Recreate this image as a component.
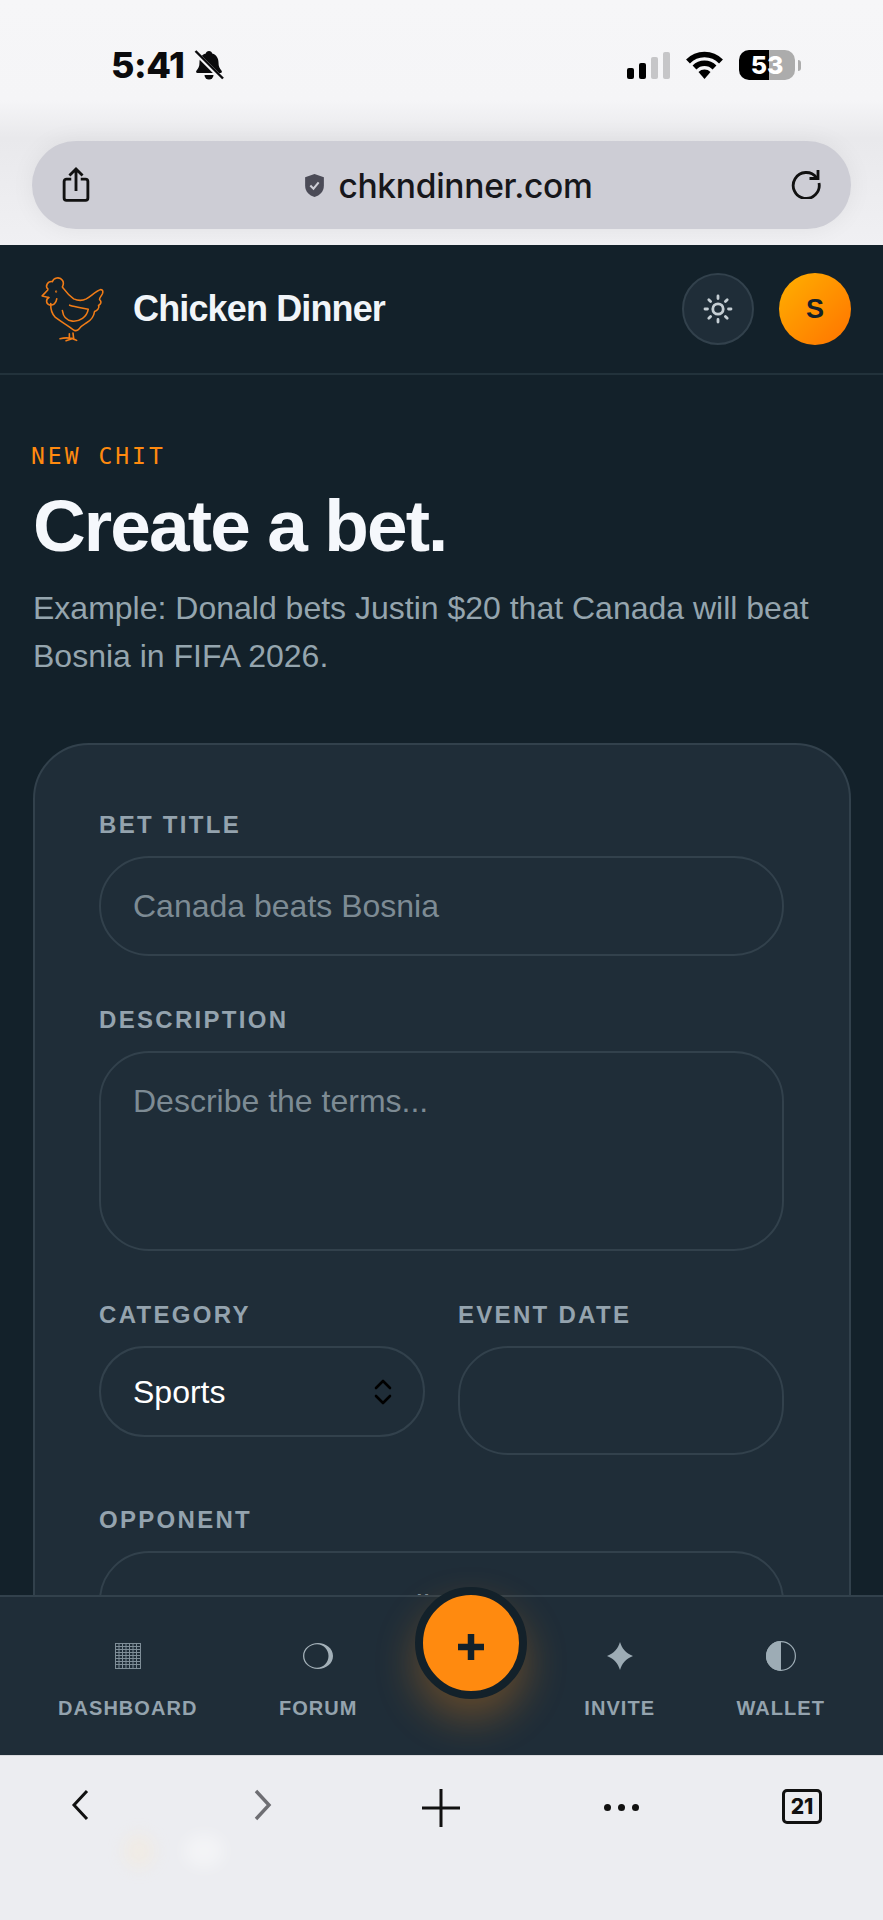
<div class="phone">
  <div class="browser-top">
    <div class="status">
      <div class="time">5:41
        <svg class="bell" viewBox="0 0 30 30" width="30" height="30">
          <path d="M15 1c1.800 0 2.900 1.100 3.200 2.500 4.300 1.300 6.300 4.800 6.300 9 0 4 1.200 6 3.100 8.200.7.900.2 2.300-1.100 2.300H3.500c-1.300 0-1.800-1.400-1.100-2.300C4.300 18.500 5.500 16.500 5.500 12.500c0-4.200 2-7.700 6.300-9C12.100 2.100 13.200 1 15 1z" fill="#0b0b0d"/>
          <path d="M10.500 25h9a4.500 4.500 0 0 1-9 0z" fill="#0b0b0d"/>
          <path d="M3 4l26 26" stroke="#f5f5f7" stroke-width="4.500"/>
          <path d="M1.500 1l27.500 27.500" stroke="#0b0b0d" stroke-width="2.400"/>
        </svg>
      </div>
      <div class="status-right">
        <div class="signal">
          <i class="on s1"></i><i class="on s2"></i><i class="s3"></i><i class="s4"></i>
        </div>
        <svg viewBox="0 0 38 28" width="39" height="28">
          <g fill="none" stroke="#000" stroke-width="5.400">
            <path d="M2.500 10.500a23 23 0 0 1 33 0"/>
            <path d="M9 16.500a14 14 0 0 1 20 0"/>
          </g>
          <path d="M13 21a8.500 8.500 0 0 1 12 0l-6 7z"/>
        </svg>
        <div class="battery"><span>53</span></div>
        <div class="nub"></div>
      </div>
    </div>
    <div class="urlbar">
      <svg viewBox="0 0 24 32" width="30" height="38" fill="none" stroke="#111" stroke-width="2.400">
        <path d="M8 11H4a2 2 0 0 0-2 2v14a2 2 0 0 0 2 2h16a2 2 0 0 0 2-2V13a2 2 0 0 0-2-2H16"/>
        <path d="M12 21V3M6.500 8L12 2.500 17.500 8"/>
      </svg>
      <div class="domain">
        <svg viewBox="0 0 20 24" width="21" height="25">
          <path d="M10 1l9 3v8c0 6-4 9.500-9 11-5-1.500-9-5-9-11V4z" fill="#4b4b57"/>
          <path d="M6 12l3 3 5-6" fill="none" stroke="#cdcdd5" stroke-width="2"/>
        </svg>
        <span>chkndinner.com</span>
      </div>
      <svg class="reload" viewBox="0 0 32 32" width="32" height="32" fill="none" stroke="#111" stroke-width="2.800">
        <path d="M26.500 10.500A13 13 0 1 0 29 16"/>
        <path d="M28 3v8.500h-8.500"/>
      </svg>
    </div>
  </div>

  <header>
    <svg class="logo" viewBox="120 105 195 205" width="65" height="68" fill="none" stroke="#f07c17" stroke-width="4.800" stroke-linecap="round" stroke-linejoin="round">
      <path d="M143 147c-8-8-2-24 14-22 3-12 22-16 30-4 6 8 2 16 0 20 8 10 16 24 34 36 14 6 26 6 38 0 14-8 30-24 44-28 6 0 7 6 5 12-3 8-10 12-9 18 8 6 4 14-3 18 5 8-6 16-12 18-2 14-10 26-24 34-10 6-18 10-24 20-8 8-16 2-26-6-14-10-28-18-44-30-10-10-15-22-14-42"/>
      <path d="M143 150l-17 18 20 5"/>
      <path d="M146 173c-10 6-8 20 2 22 12 2 20-4 22-18"/>
      <path d="M209 196c18 6 38 8 56 12-4 24-26 38-48 36-18-2-28-16-30-32"/>
      <path d="M208 282v14M219 280l2 16M180 297c12-3 24-3 36-1 4 1 10 4 14 6M198 303l18-6"/>
      <circle cx="168" cy="155" r="1"/>
    </svg>
    <div class="brand">Chicken Dinner</div>
    <button class="theme" aria-label="Theme">
      <svg viewBox="0 0 30 30" width="30" height="30" fill="none" stroke="#c5ced4" stroke-width="2.800" stroke-linecap="round">
        <circle cx="15" cy="15" r="5.200"/>
        <path d="M15 2v2.500M15 25.500V28M2 15h2.500M25.500 15H28M5.800 5.800l1.800 1.800M22.400 22.400l1.800 1.800M5.800 24.200l1.800-1.800M22.400 7.600l1.800-1.800"/>
      </svg>
    </button>
    <div class="avatar">S</div>
  </header>

  <main>
    <div class="eyebrow">NEW CHIT</div>
    <h1>Create a bet.</h1>
    <p class="lead">Example: Donald bets Justin $20 that Canada will beat Bosnia in FIFA 2026.</p>

    <form class="card">
      <label>
        <span>BET TITLE</span>
        <input type="text" placeholder="Canada beats Bosnia" />
      </label>
      <label>
        <span>DESCRIPTION</span>
        <textarea placeholder="Describe the terms..."></textarea>
      </label>
      <div class="two">
        <label>
          <span>CATEGORY</span>
          <div class="select-wrap">
            <select>
              <option>Sports</option>
              <option>Politics</option>
              <option>Other</option>
            </select>
            <svg viewBox="0 0 18 26" width="18" height="26" fill="none" stroke="#000" stroke-width="2.600" stroke-linecap="round" stroke-linejoin="round">
              <path d="M2 9l7-7 7 7M2 17l7 7 7-7"/>
            </svg>
          </div>
        </label>
        <label>
          <span>EVENT DATE</span>
          <input class="date" type="text" />
        </label>
      </div>
      <label>
        <span>OPPONENT</span>
        <input class="opponent" type="text" placeholder="Opponent user email" />
      </label>
    </form>
  </main>

  <nav>
    <div class="item">
      <svg viewBox="0 0 26 26" width="26" height="26" fill="none" stroke="#7f8e98" stroke-width="1">
        <rect x=".5" y=".5" width="25" height="25"/>
        <path d="M4 0v26M7.500 0v26M11 0v26M14.500 0v26M18 0v26M21.500 0v26M0 3.500h26M0 6.500h26M0 9.500h26M0 12.500h26M0 15.500h26M0 18.500h26M0 21.500h26"/>
      </svg>
      <span>DASHBOARD</span>
    </div>
    <div class="item">
      <svg viewBox="0 0 30 26" width="30" height="26">
        <path fill-rule="evenodd" fill="#a3b0b8" d="M15 0c8 0 15 5.500 15 13s-7 13-15 13S0 20.500 0 13 7 0 15 0zm-1 1.300C7 1.300 1.300 6.500 1.300 13S7 24.700 14 24.700c6.500 0 11.500-5.200 11.500-11.700S20.500 1.300 14 1.300z"/>
      </svg>
      <span>FORUM</span>
    </div>
    <div class="fab-slot">
      <button class="fab" aria-label="New bet">
        <svg viewBox="0 0 26 26" width="26" height="26"><path d="M13 0v26M0 13h26" stroke="#13212a" stroke-width="6.500"/></svg>
      </button>
    </div>
    <div class="item">
      <svg viewBox="0 0 28 28" width="28" height="28">
        <path fill="#9dacb5" d="M14 0c2 6.500 5.500 11 13 14-7.500 3-11 7.500-13 14-2-6.500-5.500-11-13-14 7.500-3 11-7.500 13-14z"/>
      </svg>
      <span>INVITE</span>
    </div>
    <div class="item">
      <svg viewBox="0 0 30 30" width="30" height="30">
        <circle cx="15" cy="15" r="14.400" fill="none" stroke="#9dacb5" stroke-width="1.200"/>
        <path d="M15 0a15 15 0 0 0 0 30z" fill="#9dacb5"/>
      </svg>
      <span>WALLET</span>
    </div>
  </nav>

  <div class="browser-bottom">
    <svg viewBox="0 0 18 32" width="18" height="32" fill="none" stroke="#111" stroke-width="3"><path d="M16 2L3 16l13 14"/></svg>
    <svg class="fwd" viewBox="0 0 18 32" width="18" height="32" fill="none" stroke="#6e6e73" stroke-width="3.400"><path d="M2 2l13 14L2 30"/></svg>
    <svg class="plus" viewBox="0 0 38 38" width="38" height="38" stroke="#111" stroke-width="3"><path d="M19 0v38M0 19h38"/></svg>
    <div class="dots"><i></i><i></i><i></i></div>
    <div class="tabs">21</div>
    <i class="smudge a"></i>
    <i class="smudge b"></i>
  </div>
</div>

<style>
  :global(body) {
    margin: 0;
    background: #13212a;
  }

  .phone {
    width: 883px;
    height: 1920px;
    display: flex;
    flex-direction: column;
    overflow: hidden;
    font-family: "Liberation Sans", Arial, sans-serif;
    background: #13212a;
  }

  /* safari chrome */
  .browser-top {
    height: 245px;
    box-sizing: border-box;
    padding: 49px 32px 0;
    background: linear-gradient(#f6f6f8 0, #f5f5f7 100px, #e9e9ec 138px, #f0f0f3 245px);
  }
  .status {
    height: 92px;
    display: flex;
    justify-content: space-between;
    align-items: flex-start;
    padding: 0 50px 0 79px;
  }
  .time {
    display: flex;
    align-items: center;
    gap: 9px;
    font-family: Inter, sans-serif;
    font-weight: 800;
    font-size: 36px;
    line-height: 32px;
    letter-spacing: -.4px;
    color: #0b0b0d;
  }
  .status-right {
    display: flex;
    align-items: center;
    height: 32px;
  }
  .signal {
    display: flex;
    align-items: flex-end;
    gap: 5px;
    height: 27px;
    margin-right: 15px;
  }
  .signal i {
    width: 7px;
    border-radius: 2px;
    background: #c6c6c8;
  }
  .signal .on { background: #000; }
  .s1 { height: 11px; }
  .s2 { height: 16px; }
  .s3 { height: 22px; }
  .s4 { height: 27px; }
  .battery {
    width: 56px;
    height: 30px;
    margin-left: 15px;
    border-radius: 10px;
    background: linear-gradient(90deg, #000 53.500%, #acacac 53.500%);
    color: #fff;
    font-family: Inter, sans-serif;
    font-weight: 800;
    font-size: 25px;
    line-height: 30px;
    text-align: center;
  }
  .nub {
    width: 3px;
    height: 11px;
    margin-left: 3px;
    border-radius: 0 3px 3px 0;
    background: #acacac;
  }
  .urlbar {
    height: 88px;
    display: flex;
    align-items: center;
    justify-content: space-between;
    padding: 0 29px;
    border-radius: 44px;
    background: #cdcdd5;
    box-shadow: 0 0 24px rgba(0, 0, 0, .06);
  }
  .domain {
    display: flex;
    align-items: center;
    gap: 13px;
    margin-left: 16px;
    font-family: Inter, sans-serif;
    font-weight: 500;
    font-size: 33.600px;
    letter-spacing: -.3px;
    color: #17171b;
  }
  .reload { margin-top: -4px; }

  /* app header */
  header {
    height: 130px;
    flex: none;
    box-sizing: border-box;
    display: flex;
    align-items: center;
    padding: 0 32px 0 40px;
    border-bottom: 2px solid #22323b;
  }
  .logo { flex: none; }
  .brand {
    flex: 1;
    margin-left: 28px;
    font-weight: 700;
    font-size: 36px;
    letter-spacing: -.86px;
    color: #f1f5f9;
  }
  .theme {
    width: 72px;
    height: 72px;
    padding: 0;
    display: flex;
    align-items: center;
    justify-content: center;
    border: 2px solid #32414c;
    border-radius: 50%;
    background: #1f2d38;
  }
  .avatar {
    width: 72px;
    height: 72px;
    margin-left: 25px;
    border-radius: 50%;
    background: linear-gradient(135deg, #ffb000, #ff7300);
    color: #13212a;
    font-weight: 700;
    font-size: 27px;
    line-height: 72px;
    text-align: center;
  }

  /* page */
  main {
    flex: 1;
    min-height: 0;
    overflow: hidden;
    padding: 67px 32px 0 33px;
  }
  .eyebrow {
    margin-left: -2px;
    font-family: "DejaVu Sans Mono", monospace;
    font-size: 23px;
    line-height: 28px;
    letter-spacing: 3px;
    color: #ff8a0f;
  }
  h1 {
    margin: 14px 0 0;
    font-weight: 700;
    font-size: 73px;
    line-height: 84px;
    letter-spacing: -1.900px;
    color: #f5f8fc;
  }
  .lead {
    margin: 16px 0 0;
    font-size: 32px;
    line-height: 48px;
    color: #95a5ae;
  }
  .card {
    margin-top: 63px;
    height: 1000px;
    box-sizing: border-box;
    padding: 66px 65px 0 64px;
    border: 2px solid #32414c;
    border-radius: 56px;
    background: #1f2d38;
  }
  label {
    display: block;
    margin-bottom: 50px;
  }
  label span {
    display: block;
    margin-bottom: 17px;
    font-weight: 700;
    font-size: 24px;
    line-height: 28px;
    letter-spacing: 2.300px;
    color: #94a3ae;
  }
  input, textarea, select {
    display: block;
    width: 100%;
    box-sizing: border-box;
    margin: 0;
    padding: 0 32px;
    border: 2px solid #32414c;
    outline: none;
    background: transparent;
    color: #fff;
    font-family: "Liberation Sans", Arial, sans-serif;
    font-size: 32px;
  }
  input { height: 100px; border-radius: 50px; }
  textarea {
    height: 200px;
    padding-top: 30px;
    border-radius: 50px;
    resize: none;
  }
  input::placeholder, textarea::placeholder {
    color: #7d8b94;
    opacity: 1;
  }
  .two {
    display: grid;
    grid-template-columns: 1fr 1fr;
    gap: 33px;
  }
  .two label { margin-bottom: 51px; }
  .select-wrap { position: relative; }
  .select-wrap svg {
    position: absolute;
    right: 33px;
    top: 33px;
  }
  select {
    height: 91px;
    padding: 0 32px;
    border-radius: 46px;
    appearance: none;
    -webkit-appearance: none;
  }
  .date { height: 109px; }
  .opponent { height: 110px; border-radius: 50px; }

  /* bottom tab bar */
  nav {
    position: relative;
    z-index: 2;
    height: 160px;
    flex: none;
    box-sizing: border-box;
    display: flex;
    justify-content: space-between;
    padding: 0 58px;
    border-top: 2px solid #32414c;
    background: #1f2d38;
  }
  .item {
    display: flex;
    flex-direction: column;
    align-items: center;
    color: #94a3ae;
  }
  .item svg { height: 30px; margin-top: 44px; }
  .item span {
    margin-top: 25px;
    font-weight: 700;
    font-size: 20px;
    line-height: 24px;
    letter-spacing: 1.050px;
  }
  .fab-slot {
    position: relative;
    width: 64px;
  }
  .fab {
    position: absolute;
    left: -24px;
    top: -10px;
    width: 112px;
    height: 112px;
    padding: 0;
    display: flex;
    align-items: center;
    justify-content: center;
    box-sizing: border-box;
    border: 8px solid #13212a;
    border-radius: 50%;
    background: #ff8a0f;
    box-shadow: 0 20px 40px rgba(255, 138, 15, .3);
  }
  .fab svg { margin-top: 8px; }

  .browser-bottom {
    position: relative;
    z-index: 3;
    height: 165px;
    flex: none;
    box-sizing: border-box;
    display: flex;
    align-items: flex-start;
    padding: 33px 0 0 71px;
    background: #ecedf1;
    border-top: 1px solid #d8d9dd;
  }
  .fwd { margin-left: 165px; }
  .plus { margin-left: 150px; }
  .dots {
    display: flex;
    gap: 7px;
    margin: 15px 0 0 144px;
  }
  .dots i {
    width: 7px;
    height: 7px;
    border-radius: 50%;
    background: #111;
  }
  .tabs {
    width: 40px;
    height: 35px;
    margin-left: 143px;
    box-sizing: border-box;
    border: 3px solid #111;
    border-radius: 5px;
    font-family: Inter, sans-serif;
    font-weight: 800;
    font-size: 21px;
    line-height: 29px;
    text-align: center;
    color: #111;
  }
  .smudge {
    position: absolute;
    top: 78px;
    width: 30px;
    height: 34px;
    border-radius: 50%;
    filter: blur(8px);
  }
  .smudge.a { left: 124px; background: rgba(255, 230, 190, .25); }
  .smudge.b { left: 184px; background: rgba(255, 255, 255, .4); width: 40px; }
</style>
